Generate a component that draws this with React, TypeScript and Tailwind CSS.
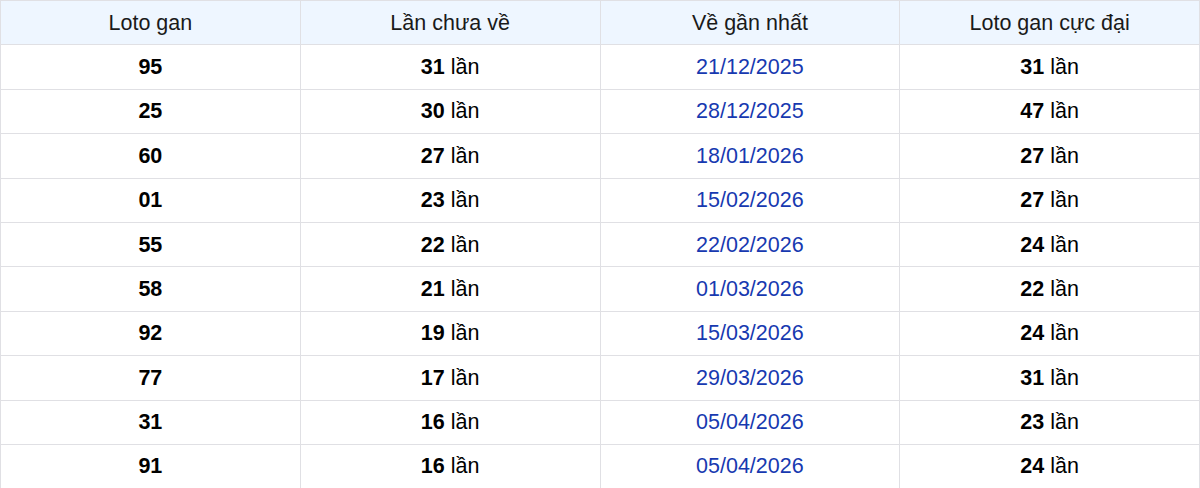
const rows: [string, string, string, string][] = [
  ["95", "31", "21/12/2025", "31"],
  ["25", "30", "28/12/2025", "47"],
  ["60", "27", "18/01/2026", "27"],
  ["01", "23", "15/02/2026", "27"],
  ["55", "22", "22/02/2026", "24"],
  ["58", "21", "01/03/2026", "22"],
  ["92", "19", "15/03/2026", "24"],
  ["77", "17", "29/03/2026", "31"],
  ["31", "16", "05/04/2026", "23"],
  ["91", "16", "05/04/2026", "24"],
];

const headers = ["Loto gan", "Lần chưa về", "Về gần nhất", "Loto gan cực đại"];

export default function App() {
  return (
    <div className="w-[1200px] bg-white font-['Liberation_Sans',Arial,sans-serif] text-[21.5px]">
      <table className="w-full table-fixed border-collapse">
        <thead>
          <tr className="h-[44.4px] bg-[#eef6ff]">
            {headers.map((h) => (
              <th key={h} className="border border-[#e0e0e4] text-center font-normal text-[#1a1a1a]">
                {h}
              </th>
            ))}
          </tr>
        </thead>
        <tbody>
          {rows.map((r, i) => (
            <tr key={i} className="h-[44.4px]">
              <td className="border border-[#e0e0e4] text-center font-bold text-black">{r[0]}</td>
              <td className="border border-[#e0e0e4] text-center text-black">
                <span className="font-bold">{r[1]}</span> lần
              </td>
              <td className="border border-[#e0e0e4] text-center text-[#1739b0]">{r[2]}</td>
              <td className="border border-[#e0e0e4] text-center text-black">
                <span className="font-bold">{r[3]}</span> lần
              </td>
            </tr>
          ))}
        </tbody>
      </table>
    </div>
  );
}
